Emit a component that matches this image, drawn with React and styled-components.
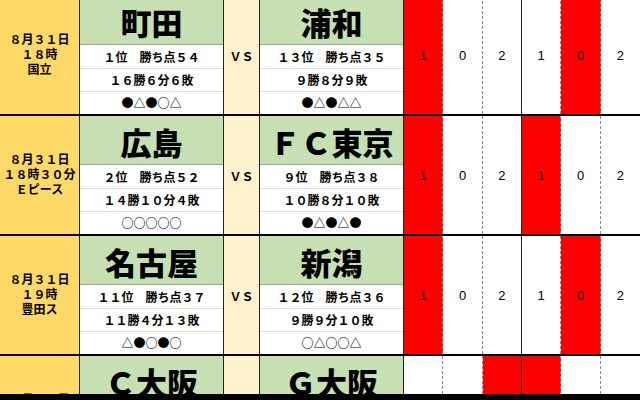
import React from 'react'
import styled, { createGlobalStyle } from 'styled-components'

const matches = [
    {
        date: ['８月３１日', '１８時', '国立'],
        home: { name: '町田', rank: '１位　勝ち点５４', rec: '１６勝６分６敗', form: '●△●○△' },
        away: { name: '浦和', rank: '１３位　勝ち点３５', rec: '９勝８分９敗', form: '●△●△△' },
        red: [0, 4],
    },
    {
        date: ['８月３１日', '１８時３０分', 'Ｅピース'],
        home: { name: '広島', rank: '２位　勝ち点５２', rec: '１４勝１０分４敗', form: '○○○○○' },
        away: { name: 'ＦＣ東京', rank: '９位　勝ち点３８', rec: '１０勝８分１０敗', form: '●△●△●' },
        red: [0, 3],
    },
    {
        date: ['８月３１日', '１９時', '豊田ス'],
        home: { name: '名古屋', rank: '１１位　勝ち点３７', rec: '１１勝４分１３敗', form: '△●○●○' },
        away: { name: '新潟', rank: '１２位　勝ち点３６', rec: '９勝９分１０敗', form: '○△○○△' },
        red: [0, 4],
    },
    {
        date: ['８月３１日', '１９時', 'ヨドコウ'],
        home: { name: 'Ｃ大阪', rank: '１０位　勝ち点３７', rec: '１０勝７分１１敗', form: '○●△○●' },
        away: { name: 'Ｇ大阪', rank: '５位　勝ち点４８', rec: '１３勝９分６敗', form: '△○○●○' },
        red: [2, 3],
    },
]

const scores = ['1', '0', '2', '1', '0', '2']

const Team = ({ team }) => (
    <TeamCell>
        <TeamName>{team.name}</TeamName>
        <SubRow>{team.rank}</SubRow>
        <SubRow>{team.rec}</SubRow>
        <SubRow $last>{team.form}</SubRow>
    </TeamCell>
)

const App = () => {
    return (
        <>
            <GlobalStyle />
            <Sheet>
                <Inner>
                    {matches.map((m, i) => (
                        <Match key={i}>
                            <DateCell>
                                {m.date.map((line, j) => <DateLine key={j}>{line}</DateLine>)}
                            </DateCell>
                            <Team team={m.home} />
                            <VsCell>ＶＳ</VsCell>
                            <Team team={m.away} />
                            {scores.map((s, k) => (
                                <ScoreCell key={k} $red={m.red.includes(k)} $idx={k}>
                                    {s}
                                </ScoreCell>
                            ))}
                        </Match>
                    ))}
                </Inner>
            </Sheet>
        </>
    )
}

export default App

const GlobalStyle = createGlobalStyle`
    html, body {
        margin:0;
        padding:0;
        background:#000;
    }
    body {
        font-family: "Noto Sans CJK JP", "Noto Sans", sans-serif;
        color:#000;
    }
`

const Sheet = styled.div`
    width:640px;
    height:394px;
    overflow:hidden;
    background:#fff;
`

const Inner = styled.div`
    margin-top:-6px;
`

const Match = styled.div`
    display:grid;
    grid-template-columns: 80px 144px 36px 144px repeat(6, 1fr);
    height:120px;
    box-sizing:border-box;
    border-top:2px solid #000;
`

const DateCell = styled.div`
    background:#ffd966;
    border-right:1px solid #222;
    display:flex;
    flex-direction:column;
    justify-content:center;
    align-items:center;
    padding-bottom:3px;
    font-size:12px;
    font-weight:700;
    white-space:nowrap;
`

const DateLine = styled.div`
    height:15px;
    line-height:15px;
`

const TeamCell = styled.div`
    display:grid;
    grid-template-rows: 49px 24px 23px 22px;
    border-right:1px solid #222;
    min-width:0;
`

const TeamName = styled.div`
    background:#c6e0b4;
    border-bottom:1px solid #9aa58f;
    box-sizing:border-box;
    display:flex;
    justify-content:center;
    align-items:center;
    padding-top:3px;
    font-size:31px;
    font-weight:900;
    line-height:1;
    white-space:nowrap;
`

const SubRow = styled.div`
    background:#fff;
    box-sizing:border-box;
    border-bottom:${props => props.$last ? 'none' : '1px solid #dedede'};
    display:flex;
    justify-content:center;
    align-items:center;
    font-size:12px;
    font-weight:700;
    line-height:1;
    white-space:nowrap;
`

const VsCell = styled.div`
    background:#fff2cc;
    border-right:1px solid #222;
    display:flex;
    justify-content:center;
    align-items:center;
    font-size:12px;
    font-weight:700;
`

const ScoreCell = styled.div`
    background:${props => props.$red ? '#ff0000' : '#fff'};
    border-right:${props => props.$idx === 5 ? 'none' : props.$idx === 2 ? '1px solid #222' : '1px dashed #8a8a8a'};
    display:flex;
    justify-content:center;
    align-items:center;
    font-family:"Liberation Sans", Arial, sans-serif;
    font-size:13px;
`
